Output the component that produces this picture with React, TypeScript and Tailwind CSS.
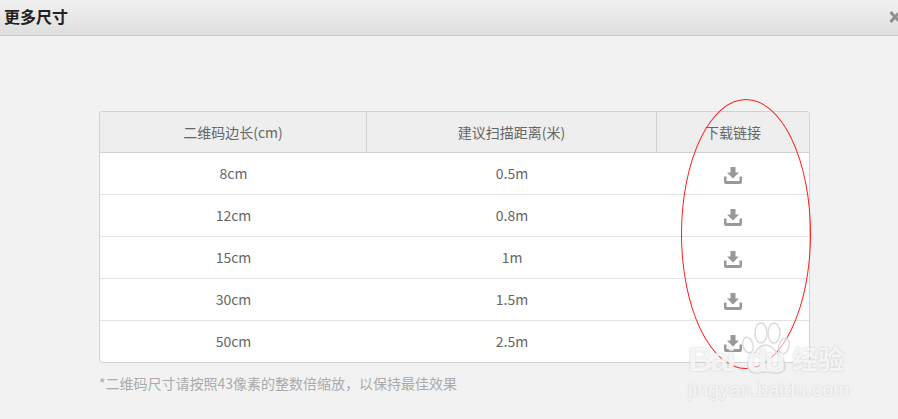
const rows = [
  { side: "8cm", distance: "0.5m" },
  { side: "12cm", distance: "0.8m" },
  { side: "15cm", distance: "1m" },
  { side: "30cm", distance: "1.5m" },
  { side: "50cm", distance: "2.5m" },
];

const cols = "grid grid-cols-[267px_290px_1fr]";

function DownloadIcon() {
  return (
    <svg width="18" height="17" viewBox="0 0 18 17" fill="#999999">
      <path d="M6.5 0h5v5.5H15L9 11.5 3 5.5h3.500z" />
      <path d="M0 9.5h2.5v4.5h13V9.5H18v5.5a2 2 0 0 1-2 2H2a2 2 0 0 1-2-2z" />
    </svg>
  );
}

function Watermark() {
  return (
    <div className="absolute left-[688px] top-[322px] w-[210px] h-[80px] text-white/80 pointer-events-none [text-shadow:0_0_2px_rgba(175,175,175,0.7)]">
      <svg className="absolute left-[50px] top-0" width="60" height="56" viewBox="0 0 60 56" fill="#ffffff" fillOpacity="0.5" stroke="#dcdcdc" strokeWidth="1.5">
        <ellipse cx="10" cy="23" rx="5" ry="8" transform="rotate(-15 10 23)" />
        <ellipse cx="23" cy="11" rx="6" ry="10" />
        <ellipse cx="36" cy="11" rx="6" ry="10" />
        <ellipse cx="46" cy="24" rx="5" ry="8" transform="rotate(15 46 24)" />
        <path d="M28 23c-6 0-9 5-13 10-4 4-6 8-5 12 1 5 6 7 11 6 5-1 10-1 15 0 6 1 11-2 11-7 0-5-3-8-7-12-4-4-6-9-12-9z" />
      </svg>
      <div className="absolute left-0 top-[20px] text-[34px] leading-[34px] font-bold tracking-[-2.5px] font-['Liberation_Sans',sans-serif]">
        Bai<span className="ml-[13px]">du</span>
      </div>
      <div className="absolute left-[104px] top-[21px] text-[26px] leading-[30px] font-bold font-['Noto_Sans_CJK_SC',sans-serif]">
        经验
      </div>
      <div className="absolute left-0 top-[57px] text-[19px] leading-[22px] tracking-[0.5px] font-['Liberation_Sans',sans-serif]">
        jingyan.baidu.com
      </div>
    </div>
  );
}

export default function App() {
  return (
    <div className="relative w-[898px] h-[419px] overflow-hidden bg-[#f2f2f2] font-['Noto_Sans_CJK_SC','Noto_Sans',sans-serif] text-[14px] text-[#666]">
      <div className="flex h-[36px] items-center justify-between border-b border-[#c8c8c8] bg-gradient-to-b from-[#f1f1f1] to-[#dedede] pl-[4px]">
        <h3 className="text-[16px] leading-[33px] font-bold text-[#222] -mt-[3px]">更多尺寸</h3>
        <svg className="-mr-[2px] -mt-[1px]" width="11" height="12" viewBox="0 0 11 12" fill="none" stroke="#8f8f8f" strokeWidth="3">
          <path d="M1.5 1 6 6l-4.500 5M11 1 6 6l5 5" />
        </svg>
      </div>

      <div className="mt-[75px] ml-[99px] w-[711px]">
        <div className="rounded-[3px] border border-[#d2d2d2] overflow-hidden bg-white">
          <div className={`${cols} h-[41px] bg-[#eeeeee] border-b border-[#d2d2d2] text-center leading-[41px]`}>
            <div className="border-r border-[#d2d2d2]">二维码边长(cm)</div>
            <div className="border-r border-[#d2d2d2]">建议扫描距离(米)</div>
            <div>下载链接</div>
          </div>
          {rows.map((row, i) => (
            <div
              key={row.side}
              className={`${cols} items-center text-center ${i < rows.length - 1 ? "h-[42px] border-b border-[#e3e3e3]" : "h-[41px]"}`}
            >
              <div>{row.side}</div>
              <div>{row.distance}</div>
              <div className="flex justify-center pt-[3px]">
                <DownloadIcon />
              </div>
            </div>
          ))}
        </div>
        <p className="mt-[10px] text-[14px] leading-[20px] text-[#aaaaaa]">*二维码尺寸请按照43像素的整数倍缩放，以保持最佳效果</p>
      </div>

      <div className="absolute left-[681px] top-[99px] w-[130px] h-[270px] rounded-[50%] border border-[#ff1c1c] pointer-events-none" />
      <Watermark />
    </div>
  );
}
